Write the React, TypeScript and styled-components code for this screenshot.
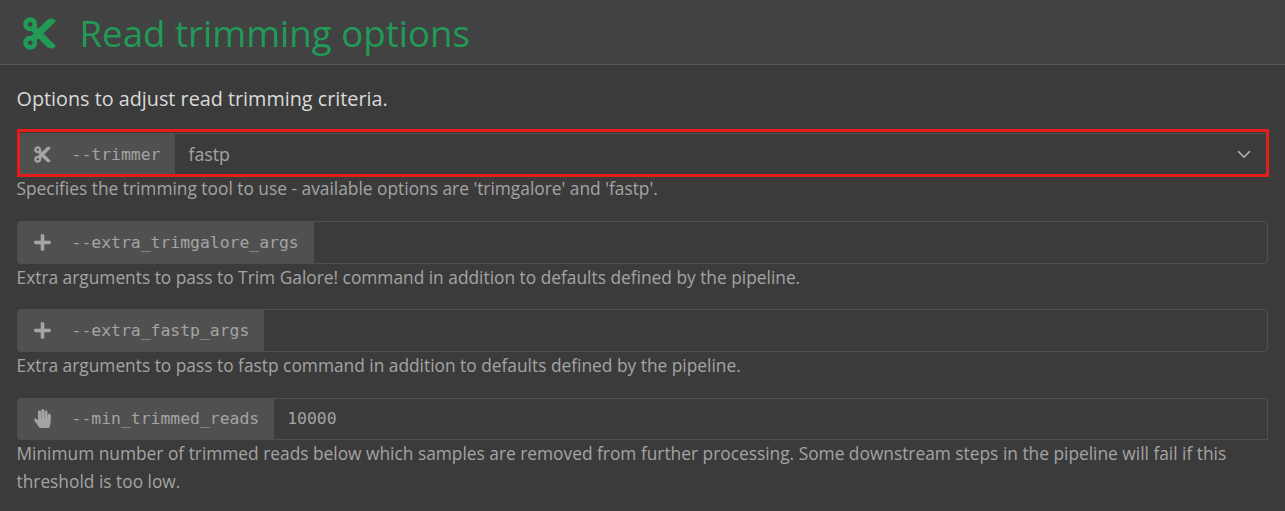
import React from 'react';
import styled, { createGlobalStyle } from 'styled-components';
import { FaCut, FaPlus, FaHandPaper } from 'react-icons/fa';

const GlobalStyle = createGlobalStyle`
  * { box-sizing: border-box; }
  body {
    margin: 0;
    background: #3b3b3b;
    color: #a4a4a4;
    font-family: 'Open Sans', 'Noto Sans', sans-serif;
  }
`;

const Card = styled.section`
  height: 511px;
  overflow: hidden;
`;

const Header = styled.header`
  display: flex;
  align-items: center;
  height: 65px;
  padding: 0 20.5px;
  gap: 22px;
  background: #424242;
  border-bottom: 1px solid #595959;
  color: #209a56;

  svg { margin-top: 2px; }
`;

const Title = styled.h2`
  margin: 0;
  padding-top: 2px;
  font-size: 36.65px;
  font-weight: 400;
  line-height: 48px;
  white-space: nowrap;
`;

const Body = styled.div`
  padding: 19px 17px 0;
`;

const Lead = styled.p`
  margin: 0 0 19px -0.5px;
  color: #dadada;
  font-size: 19.8px;
  line-height: 30px;
`;

const Field = styled.div<{ $gap: number }>`
  margin-bottom: ${(p) => p.$gap}px;
`;

const Group = styled.div<{ $square?: boolean; $height: number }>`
  position: relative;
  display: flex;
  height: ${(p) => p.$height}px;
  border: 1px solid #505050;
  border-radius: ${(p) => (p.$square ? '4px 0 0 4px' : '4px')};
`;

const Label = styled.label<{ $raised?: boolean }>`
  display: flex;
  align-items: center;
  padding: 0 15px ${(p) => (p.$raised ? 2 : 0)}px;
  gap: 19.5px;
  background: #505050;
  font-family: 'DejaVu Sans Mono', monospace;
  font-size: 16.42px;
  white-space: nowrap;
`;

const Value = styled.div<{ $mono?: boolean }>`
  flex: 1;
  display: flex;
  align-items: center;
  justify-content: space-between;
  padding: 0 16px ${(p) => (p.$mono ? 2 : 0)}px 13px;
  font-family: ${(p) => (p.$mono ? "'DejaVu Sans Mono', monospace" : 'inherit')};
  font-size: ${(p) => (p.$mono ? 16.4 : 17.8)}px;
`;

const Highlight = styled.div`
  position: absolute;
  inset: -5px -2px -3px -1px;
  border: 3px solid #e61c1c;
`;

const Help = styled.p`
  margin: -1px 0 0 -0.5px;
  font-size: 17.33px;
  line-height: 28px;
`;

const Chevron = () => (
  <svg width="14" height="9" viewBox="0 0 14 9" fill="none" stroke="#a8a8a8" strokeWidth="1.7">
    <path d="M1.5 1.7 7 7.2 12.5 1.7" strokeLinecap="round" strokeLinejoin="round" />
  </svg>
);

export default function App() {
  return (
    <>
      <GlobalStyle />
      <Card>
        <Header>
          <FaCut size={37} />
          <Title>Read trimming options</Title>
        </Header>
        <Body>
          <Lead>Options to adjust read trimming criteria.</Lead>
          <Field $gap={19}>
            <Group $height={42}>
              <Label><FaCut size={19} />--trimmer</Label>
              <Value>fastp<Chevron /></Value>
              <Highlight />
            </Group>
            <Help>Specifies the trimming tool to use - available options are 'trimgalore' and 'fastp'.</Help>
          </Field>
          <Field $gap={18}>
            <Group $height={43}>
              <Label><FaPlus size={19} />--extra_trimgalore_args</Label>
              <Value $mono />
            </Group>
            <Help>Extra arguments to pass to Trim Galore! command in addition to defaults defined by the pipeline.</Help>
          </Field>
          <Field $gap={19}>
            <Group $height={43}>
              <Label><FaPlus size={19} />--extra_fastp_args</Label>
              <Value $mono />
            </Group>
            <Help>Extra arguments to pass to fastp command in addition to defaults defined by the pipeline.</Help>
          </Field>
          <Field $gap={0}>
            <Group $square $height={42}>
              <Label $raised><FaHandPaper size={19} />--min_trimmed_reads</Label>
              <Value $mono>10000</Value>
            </Group>
            <Help>Minimum number of trimmed reads below which samples are removed from further processing. Some downstream steps in the pipeline will fail if this threshold is too low.</Help>
          </Field>
        </Body>
      </Card>
    </>
  );
}
